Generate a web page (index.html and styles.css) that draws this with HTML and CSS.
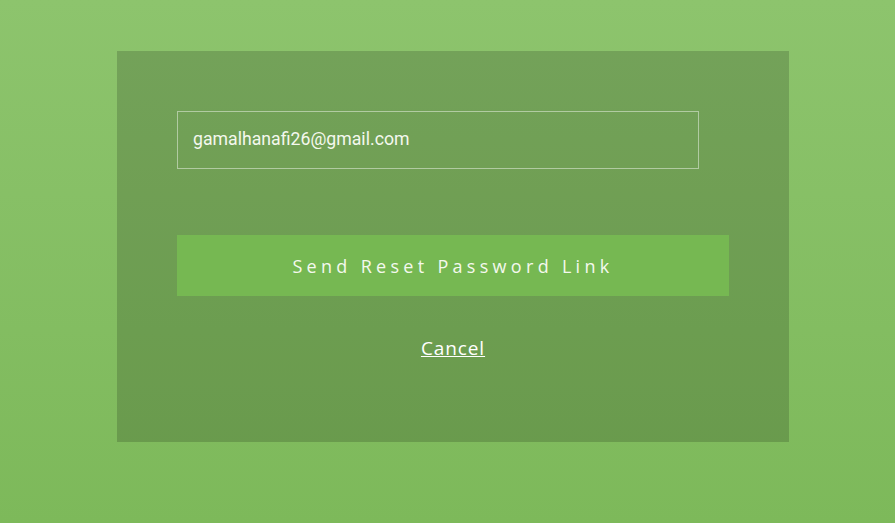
FILE: index.html
```html
<!DOCTYPE html>
<html>
<head>
<meta charset="utf-8">
<link rel="stylesheet" href="styles.css">
</head>
<body>
<div class="page">
  <form class="card">
    <div class="field">gamalhanafi26@gmail.com</div>
    <button type="button" class="send">Send Reset Password Link</button>
    <a class="cancel" href="#">Cancel</a>
  </form>
</div>
</body>
</html>
```
FILE: styles.css
```css
html, body {
  margin: 0;
  padding: 0;
  height: 100%;
}
body {
  background: linear-gradient(to bottom, #8dc46d 0%, #7db95a 100%);
  font-family: "Open Sans", sans-serif;
}
.page {
  padding: 51px 0 0 117px;
}
.card {
  width: 552px;
  height: 271px;
  padding: 60px;
  background: rgba(0, 0, 0, 0.17);
  display: flex;
  flex-direction: column;
  align-items: flex-start;
  margin: 0;
}
.field {
  box-sizing: border-box;
  width: 522px;
  height: 58px;
  border: 1px solid rgba(255, 255, 255, 0.45);
  padding: 0 15px 2px;
  display: flex;
  align-items: center;
  font-family: Roboto, sans-serif;
  font-size: 17.7px;
  color: #f4f8ee;
}
.send {
  margin-top: 66px;
  width: 552px;
  height: 61px;
  border: none;
  background: #76b852;
  color: #f4f8ee;
  font-family: "Open Sans", sans-serif;
  font-size: 18px;
  letter-spacing: 4.3px;
  padding: 0;
  cursor: pointer;
}
.cancel {
  align-self: center;
  margin-top: 39px;
  color: #ffffff;
  font-size: 19px;
  letter-spacing: 0.9px;
  text-decoration: underline;
}
```
